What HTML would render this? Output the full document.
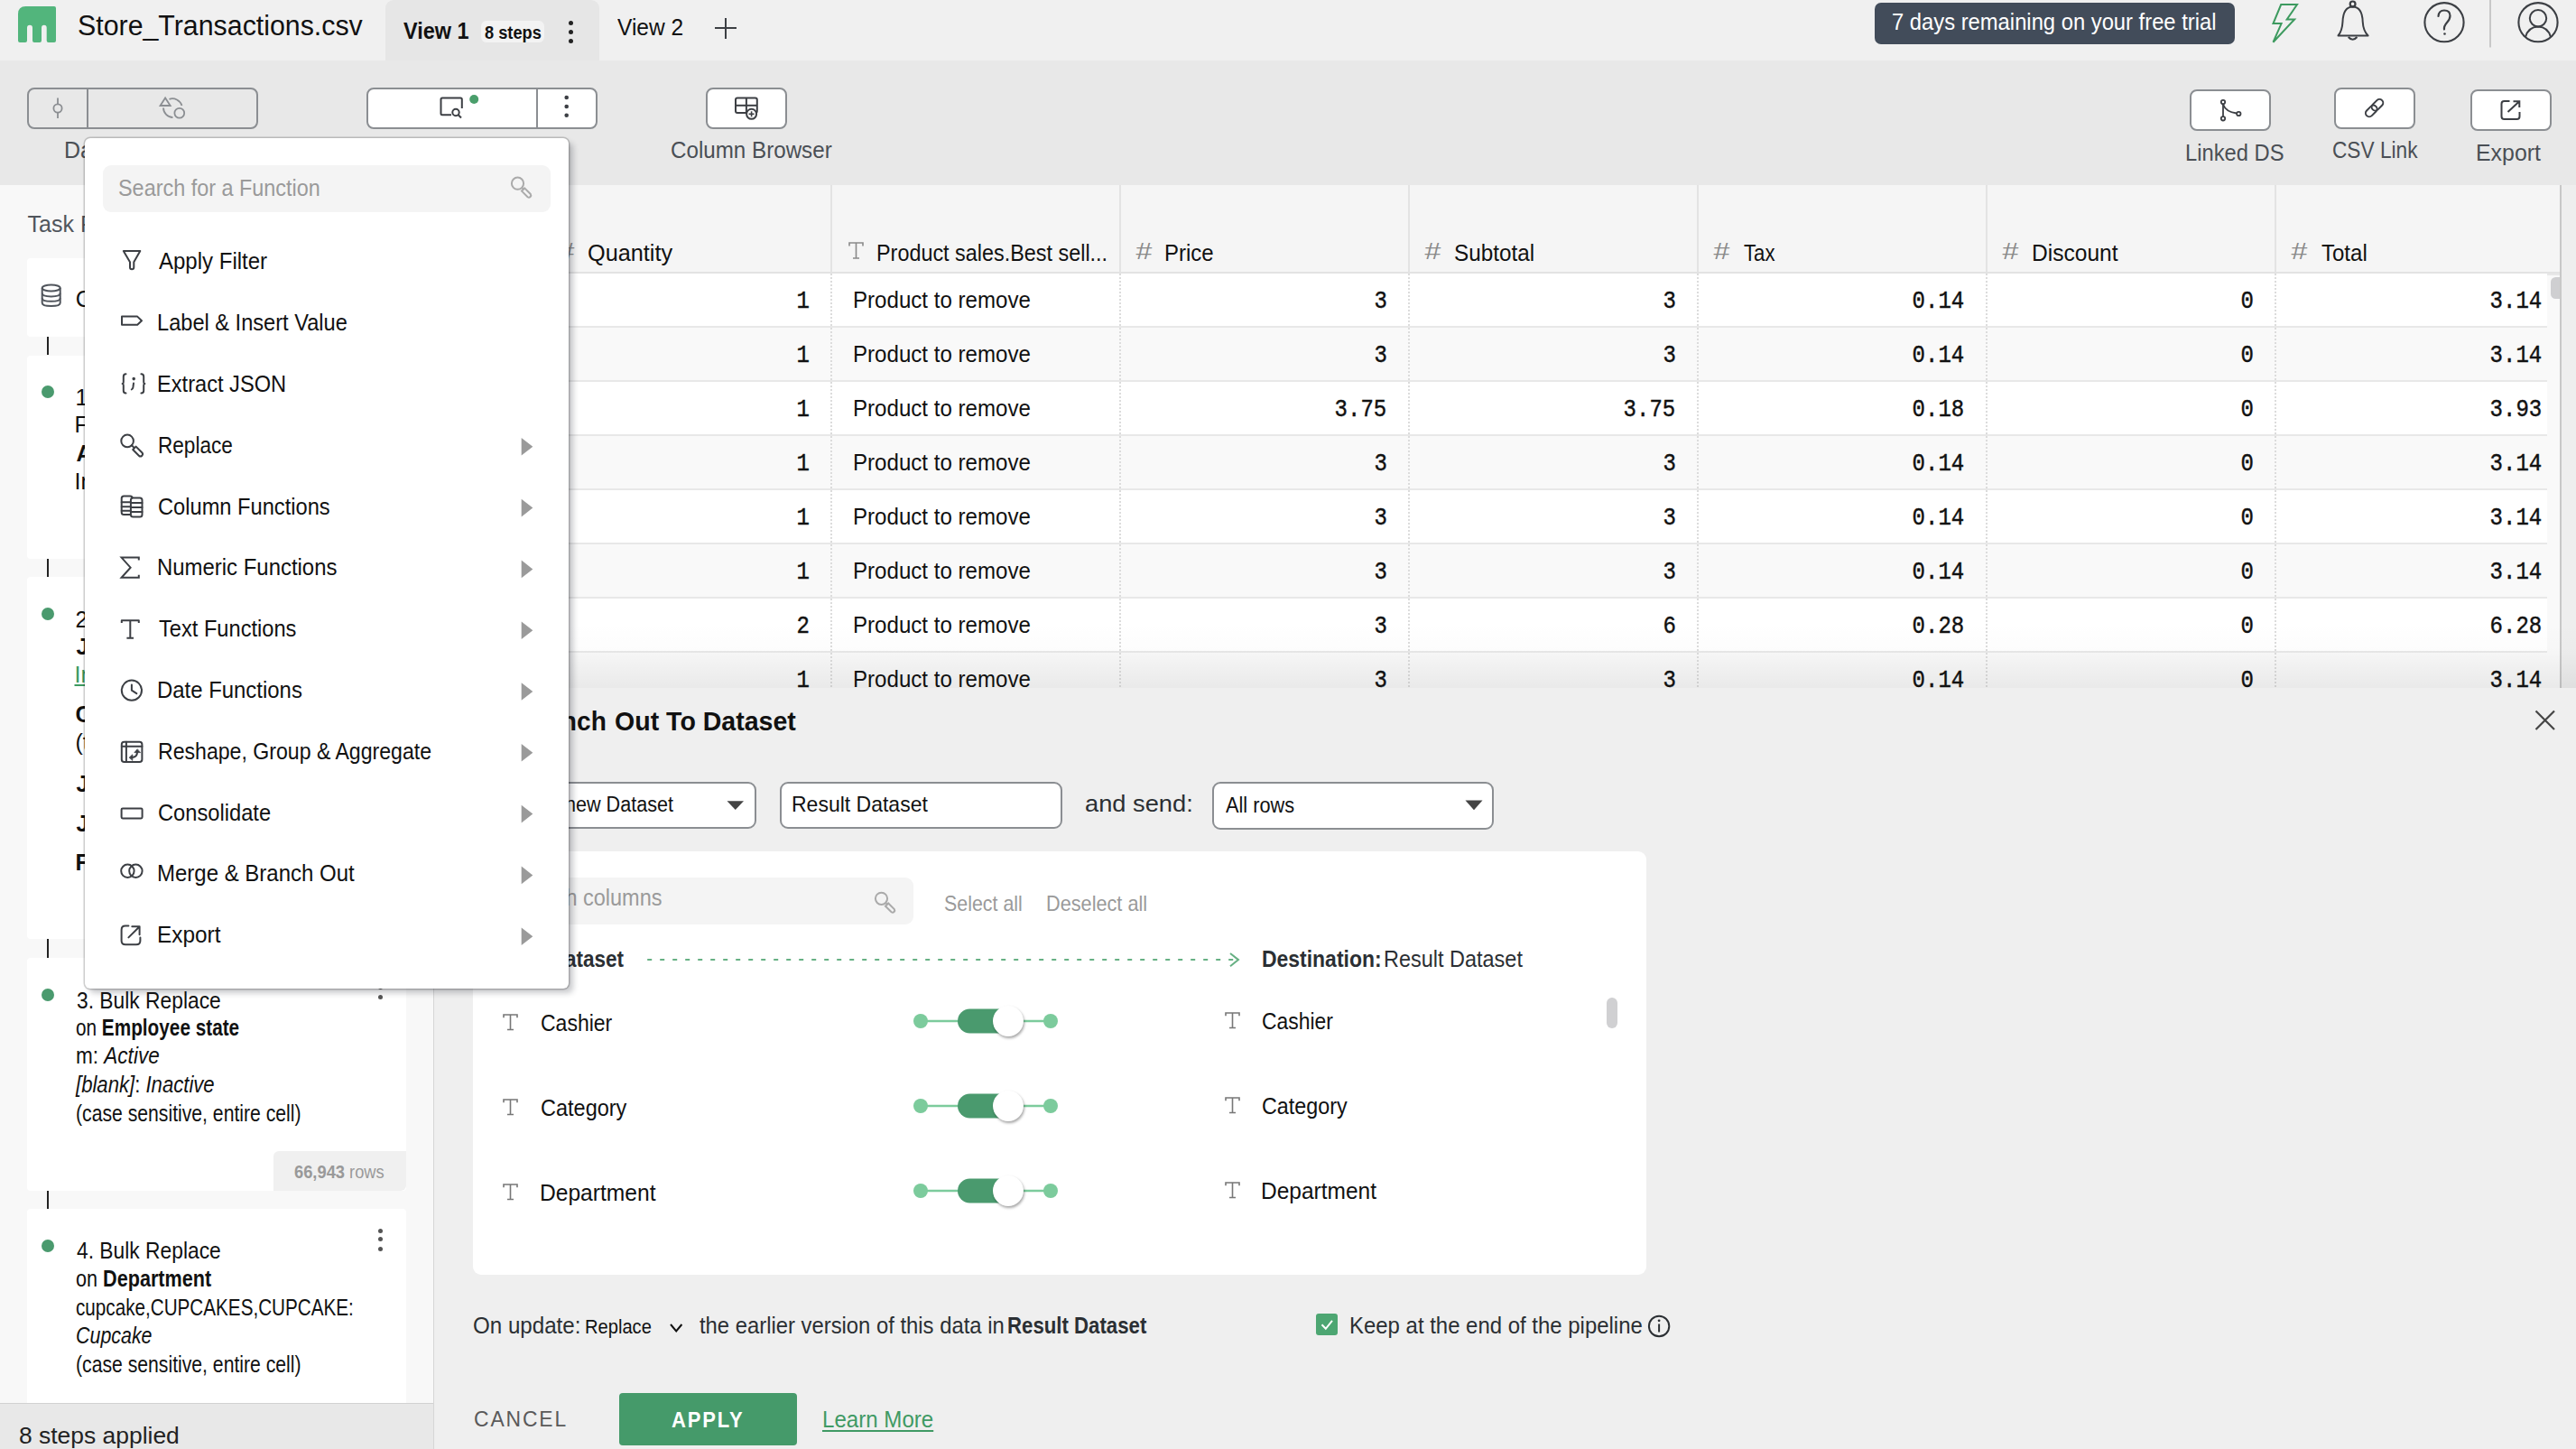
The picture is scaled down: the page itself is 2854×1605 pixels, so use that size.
<!DOCTYPE html>
<html><head><meta charset="utf-8">
<style>
*{margin:0;padding:0;box-sizing:border-box}
html,body{width:2854px;height:1605px;overflow:hidden}
body{position:relative;background:#f5f5f5;font-family:"Liberation Sans",sans-serif;color:#111}
.a{position:absolute}
.t{position:absolute;white-space:nowrap}
.m{font-family:"Liberation Mono",monospace}
.b{font-weight:bold}
svg{position:absolute;overflow:visible}
.btn{position:absolute;border:2px solid #8b8e92;border-radius:8px;background:#fff}
.lbl{color:#4a4f55;font-size:25px}
.card{position:absolute;left:30px;width:420px;background:#fff;border-radius:4px}
.conn{position:absolute;left:52px;width:2px;background:#222}
.dot{position:absolute;left:46px;width:14px;height:14px;border-radius:50%;background:#4a9a6e}
.kb{position:absolute;width:5px;height:5px;border-radius:50%;background:#555}
.ct{font-size:25px;color:#111}
</style></head><body>
<!-- ================= TOP BAR ================= -->
<div class="a" style="left:0;top:0;width:2854px;height:67px;background:#f0f0f0"></div>
<svg style="left:20px;top:7px" width="42" height="40" viewBox="0 0 42 40">
<path d="M0 8.5 Q0 0 8.5 0 L40 0 Q42 0 42 2 L42 38 Q42 40 40 40 L33.7 40 Q31.7 40 31.7 38 L31.7 23.7 Q31.7 20.7 28.85 20.7 Q26 20.7 26 23.7 L26 38 Q26 40 24 40 L18 40 Q16 40 16 38 L16 23.7 Q16 20.7 13 20.7 Q10 20.7 10 23.7 L10 38 Q10 40 8 40 L2 40 Q0 40 0 38 Z" fill="#52b57c"></path>
</svg>
<div class="t" style="font-size: 31px; color: rgb(17, 17, 17); line-height: 31px; top: 12.96px; left: 85.52px; transform: scaleX(0.9784); transform-origin: 0px 0px;">Store_Transactions.csv</div>
<div class="a" style="left:427px;top:0;width:237px;height:67px;background:#e6e6e6;border-radius:9px 9px 0 0"></div>
<div class="t b" style="font-size: 25px; line-height: 25px; top: 21.63px; left: 447px; transform: scaleX(0.9372); transform-origin: 0px 0px;">View 1</div>
<div class="a" style="left:533px;top:23px;width:70px;height:24px;background:#f3f3f3;border-radius:6px"></div>
<div class="t b" style="font-size: 20px; line-height: 20px; top: 25.87px; left: 536.7px; transform: scaleX(0.9113); transform-origin: 0px 0px;">8 steps</div>
<div class="kb" style="left:629.5px;top:22.5px;background:#222"></div>
<div class="kb" style="left:629.5px;top:32.5px;background:#222"></div>
<div class="kb" style="left:629.5px;top:42.5px;background:#222"></div>
<div class="t" style="font-size: 25px; line-height: 25px; top: 17.63px; left: 684px; transform: scaleX(0.9813); transform-origin: 0px 0px;">View 2</div>
<div class="a" style="left:792px;top:29.8px;width:24px;height:2.2px;background:#3c3f44"></div>
<div class="a" style="left:802.9px;top:19.5px;width:2.2px;height:23px;background:#3c3f44"></div>
<div class="a" style="left:2077px;top:3px;width:399px;height:46px;background:#424c5a;border-radius:7px"></div>
<div class="t" style="font-size: 25px; color: rgb(255, 255, 255); line-height: 25px; top: 12.23px; left: 2096.45px; transform: scaleX(0.9512); transform-origin: 0px 0px;">7 days remaining on your free trial</div>
<svg style="left:0;top:0" width="2854" height="67">
<path d="M2527.2 5.1 L2545 5.1 L2533.7 21.5 L2542.1 21.5 L2518.5 46.7 L2527.6 26.1 L2518.5 26.1 Z" fill="none" stroke="#3d9a5f" stroke-width="2" stroke-linejoin="miter"></path>
<circle cx="2606.6" cy="4.4" r="2.9" fill="none" stroke="#3c3f44" stroke-width="2.2"></circle>
<path d="M2590.5 39.5 Q2595 34 2595.5 24 Q2596 7.6 2606.6 7.4 Q2617.2 7.6 2617.7 24 Q2618.2 34 2623.6 39.5 Z" fill="none" stroke="#3c3f44" stroke-width="2.0" stroke-linejoin="round"></path>
<path d="M2601.8 41 Q2606.6 46.5 2611.4 41" fill="none" stroke="#3c3f44" stroke-width="2.2"></path>
<circle cx="2708" cy="24.7" r="21.6" fill="none" stroke="#3c3f44" stroke-width="2.1"></circle>
<path d="M2701.5 18 Q2702 11.5 2708 11.5 Q2714.5 11.5 2714.5 17.5 Q2714.5 21 2711 25 Q2707.5 29 2708 32.5" fill="none" stroke="#3c3f44" stroke-width="2.2" stroke-linecap="round"></path>
<circle cx="2708.5" cy="37.5" r="1.3" fill="#3c3f44"></circle>
<rect x="2758" y="0" width="2" height="52.5" fill="#c8c8c8"></rect>
<circle cx="2812" cy="24.7" r="21.6" fill="none" stroke="#3c3f44" stroke-width="2.1"></circle>
<circle cx="2812" cy="20.3" r="9.2" fill="none" stroke="#3c3f44" stroke-width="2.0"></circle>
<path d="M2798 41 Q2801 30 2812 29.5 Q2823 30 2826 41" fill="none" stroke="#3c3f44" stroke-width="2.0"></path>
</svg>

<!-- ================= TOOLBAR ================= -->
<div class="a" style="left:0;top:67px;width:2854px;height:138px;background:#e8e8e8"></div>
<div class="btn" style="left:30px;top:97px;width:256px;height:46px;background:transparent"></div>
<div class="a" style="left:96px;top:98px;width:2px;height:44px;background:#8b8e92"></div>
<div class="btn" style="left:406px;top:97px;width:256px;height:46px"></div>
<div class="a" style="left:594px;top:98px;width:2px;height:44px;background:#8b8e92"></div>
<div class="btn" style="left:782px;top:97px;width:90px;height:46px"></div>
<div class="btn" style="left:2426px;top:99px;width:90px;height:46px"></div>
<div class="btn" style="left:2586px;top:97px;width:90px;height:46px"></div>
<div class="btn" style="left:2737px;top:99px;width:90px;height:46px"></div>
<svg style="left:0;top:0" width="2854" height="205">
<g fill="none" stroke="#8b8e92" stroke-width="1.8">
<line x1="64" y1="108.5" x2="64" y2="115.2"></line><circle cx="64" cy="120" r="4.6"></circle><line x1="64" y1="124.8" x2="64" y2="131"></line>
<path d="M177.6 117 L183.1 108.5 L188.7 117 Z"></path>
<path d="M187.5 109.8 A11 11 0 0 1 201.5 117"></path>
<path d="M181 119.5 A11 11 0 0 0 191.5 130.2"></path>
<circle cx="198.8" cy="125.3" r="5.4"></circle>
</g>
<g fill="none" stroke="#3c3f44" stroke-width="2">
<path d="M500 127.3 L490 127.3 Q488.5 127.3 488.5 125.8 L488.5 110.1 Q488.5 108.6 490 108.6 L510.3 108.6 Q511.8 108.6 511.8 110.1 L511.8 120"></path>
<circle cx="505" cy="124.5" r="3.7"></circle><line x1="507.7" y1="127.2" x2="511" y2="130.5"></line>
<rect x="815" y="108.6" width="23.8" height="16.4" rx="2"></rect>
<line x1="815" y1="116.8" x2="838.8" y2="116.8"></line><line x1="826.9" y1="108.6" x2="826.9" y2="125"></line>
</g>
<circle cx="832.6" cy="126.3" r="5.5" fill="#fff" stroke="#3c3f44" stroke-width="2"></circle>
<line x1="829.6" y1="126.3" x2="835.6" y2="126.3" stroke="#3c3f44" stroke-width="1.6"></line><line x1="832.6" y1="123.3" x2="832.6" y2="129.3" stroke="#3c3f44" stroke-width="1.6"></line>
<circle cx="525.2" cy="110" r="5" fill="#4a9e6b"></circle>
<circle cx="627.7" cy="108" r="2.3" fill="#3c3f44"></circle><circle cx="627.7" cy="118" r="2.3" fill="#3c3f44"></circle><circle cx="627.7" cy="127.8" r="2.3" fill="#3c3f44"></circle>
<g fill="none" stroke="#3c3f44" stroke-width="1.8">
<circle cx="2463" cy="113" r="2.2"></circle><circle cx="2463" cy="131.3" r="2.2"></circle><circle cx="2480.3" cy="126" r="2.2"></circle>
<line x1="2463" y1="115.2" x2="2463" y2="129.1"></line>
<path d="M2463 115.5 Q2466 124 2478 125.5"></path>
<g transform="rotate(-45 2630.6 119.6)"><rect x="2618.6" y="115.6" width="14.5" height="8" rx="4" stroke-width="2"></rect><rect x="2628.1" y="115.6" width="14.5" height="8" rx="4" stroke-width="2"></rect></g>

<path d="M2780.5 112 L2774.5 112 Q2771.5 112 2771.5 115 L2771.5 129 Q2771.5 132 2774.5 132 L2788.5 132 Q2791.5 132 2791.5 129 L2791.5 124" stroke-width="2"></path>
<path d="M2778.5 124 L2791 112.5 M2784.5 112.3 L2791.3 112.3 L2791.3 119" stroke-width="2"></path>
</g>
</svg>
<div class="t lbl" style="line-height: 25px; top: 154.34px; left: 71px;">Data Sources</div>
<div class="t lbl" style="line-height: 25px; top: 154.34px; left: 743.13px; transform: scaleX(0.967); transform-origin: 0px 0px;">Column Browser</div>
<div class="t lbl" style="line-height: 25px; top: 156.84px; left: 2421.1px; transform: scaleX(0.9497); transform-origin: 0px 0px;">Linked DS</div>
<div class="t lbl" style="line-height: 25px; top: 153.84px; left: 2584.09px; transform: scaleX(0.9064); transform-origin: 0px 0px;">CSV Link</div>
<div class="t lbl" style="line-height: 25px; top: 156.84px; left: 2743.01px; transform: scaleX(0.9956); transform-origin: 0px 0px;">Export</div>


<!-- ================= LEFT PANEL ================= -->
<div class="a" style="left:0;top:205px;width:481px;height:1400px;background:#f8f8f8"></div>
<div class="t" style="font-size: 25px; color: rgb(80, 85, 92); line-height: 25px; top: 235.73px; left: 30.6px;">Task Pipeline</div>
<div class="card" style="top:285.7px;height:87px"></div>
<svg style="left:0;top:0" width="100" height="400">
<g fill="none" stroke="#50555c" stroke-width="2">
<ellipse cx="56.7" cy="319" rx="10" ry="3.6"></ellipse>
<path d="M46.7 319 L46.7 335.5 Q46.7 339 56.7 339 Q66.7 339 66.7 335.5 L66.7 319"></path>
<path d="M46.7 324.8 Q46.7 328.4 56.7 328.4 Q66.7 328.4 66.7 324.8"></path>
<path d="M46.7 330.2 Q46.7 333.8 56.7 333.8 Q66.7 333.8 66.7 330.2"></path>
</g></svg>
<div class="t ct" style="line-height: 25px; top: 319.33px; left: 83.8px;">Customer Transactions</div>
<div class="conn" style="top:373px;height:20px"></div>
<div class="card" style="top:393.7px;height:225.3px"></div>
<div class="dot" style="top:427px"></div>
<div class="t ct" style="line-height: 25px; top: 427.53px; left: 83.5px;">1. Filter</div>
<div class="t ct" style="line-height: 25px; top: 457.63px; left: 82.5px;">Filter rows where</div>
<div class="t b ct" style="line-height: 25px; top: 489.53px; left: 84.5px;">Active</div>
<div class="t ct" style="line-height: 25px; top: 520.84px; left: 82.5px;">In Employee state</div>
<div class="conn" style="top:619px;height:20px"></div>
<div class="card" style="top:639.2px;height:400.8px"></div>
<div class="dot" style="top:673px"></div>
<div class="t ct" style="line-height: 25px; top: 674.24px; left: 83.5px;">2. Join</div>
<div class="t b ct" style="line-height: 25px; top: 703.84px; left: 84.5px;">Join with</div>
<div class="t ct" style="color: rgb(61, 154, 95); text-decoration: underline; line-height: 25px; top: 735.44px; left: 82.5px;">Inventory</div>
<div class="t b ct" style="line-height: 25px; top: 779.44px; left: 83.5px;">Columns</div>
<div class="t ct" style="line-height: 25px; top: 809.84px; left: 83.5px;">(total 3)</div>
<div class="t b ct" style="line-height: 25px; top: 856.44px; left: 84.5px;">Join keys</div>
<div class="t b ct" style="line-height: 25px; top: 899.84px; left: 84.5px;">Join type</div>
<div class="t b ct" style="line-height: 25px; top: 943.34px; left: 83.5px;">Filter</div>
<div class="conn" style="top:1040px;height:21px"></div>
<div class="card" style="top:1061px;height:257.7px"></div>
<div class="dot" style="top:1095.3px"></div>
<div class="kb" style="left:419.3px;top:1080.5px"></div>
<div class="kb" style="left:419.3px;top:1090.5px"></div>
<div class="kb" style="left:419.3px;top:1102.1px"></div>
<div class="t ct" style="line-height: 25px; top: 1095.84px; left: 84.5px; transform: scaleX(0.9122); transform-origin: 0px 0px;">3. Bulk Replace</div>
<div class="t ct" style="line-height: 25px; top: 1125.74px; left: 83.88px; transform: scaleX(0.8303); transform-origin: 0px 0px;">on <b>Employee state</b></div>
<div class="t ct" style="line-height: 25px; top: 1157.43px; left: 83.82px; transform: scaleX(0.9017); transform-origin: 0px 0px;">m: <i>Active</i></div>
<div class="t ct" style="line-height: 25px; top: 1189.13px; left: 83.84px; transform: scaleX(0.8844); transform-origin: 0px 0px;"><i>[blank]</i>: <i>Inactive</i></div>
<div class="t ct" style="line-height: 25px; top: 1220.84px; left: 83.65px; transform: scaleX(0.8473); transform-origin: 0px 0px;">(case sensitive, entire cell)</div>
<div class="a" style="left:303.3px;top:1275.3px;width:146.7px;height:43.4px;background:#f0f0f0;border-radius:6px 0 6px 0"></div>
<div class="t" style="font-size: 20px; color: rgb(153, 153, 153); line-height: 20px; top: 1288.37px; left: 326.45px; transform: scaleX(0.9155); transform-origin: 0px 0px;"><b>66,943</b> rows</div>
<div class="conn" style="top:1318.7px;height:20.6px"></div>
<div class="card" style="top:1339.3px;height:300px"></div>
<div class="dot" style="top:1373px"></div>
<div class="kb" style="left:419.3px;top:1360.8px"></div>
<div class="kb" style="left:419.3px;top:1370.4px"></div>
<div class="kb" style="left:419.3px;top:1380.7px"></div>
<div class="t ct" style="line-height: 25px; top: 1373.34px; left: 84.5px; transform: scaleX(0.9122); transform-origin: 0px 0px;">4. Bulk Replace</div>
<div class="t ct" style="line-height: 25px; top: 1404.13px; left: 83.85px; transform: scaleX(0.8644); transform-origin: 0px 0px;">on <b>Department</b></div>
<div class="t ct" style="line-height: 25px; top: 1435.54px; left: 83.67px; transform: scaleX(0.8267); transform-origin: 0px 0px;">cupcake,CUPCAKES,CUPCAKE:</div>
<div class="t ct" style="font-style: italic; line-height: 25px; top: 1467.34px; left: 83.64px; transform: scaleX(0.8567); transform-origin: 0px 0px;">Cupcake</div>
<div class="t ct" style="line-height: 25px; top: 1499.13px; left: 83.65px; transform: scaleX(0.8473); transform-origin: 0px 0px;">(case sensitive, entire cell)</div>
<div class="a" style="left:0;top:1553.6px;width:481px;height:52px;background:#e8e8e8;border-top:1px solid #d2d2d2"></div>
<div class="a" style="left:480px;top:205px;width:2.5px;height:1400px;background:#d6d6d6"></div>
<div class="t" style="font-size: 25px; color: rgb(34, 34, 34); line-height: 25px; top: 1577.63px; left: 21.14px; transform: scaleX(1.0573); transform-origin: 0px 0px;">8 steps applied</div>

<!-- ================= TABLE ================= -->
<div class="a" style="left:481px;top:205px;width:2373px;height:557px;background:#fff;overflow:hidden">
<div class="a" style="left:0;top:0;width:2373px;height:96px;background:#f5f5f5"></div>
<div class="a" style="left:0;top:96px;width:2373px;height:2px;background:#e3e3e3"></div>
<div class="a" style="left:0;top:98px;width:2373px;height:58px;background:#ffffff"></div>
<div class="a" style="left:0;top:156px;width:2373px;height:2px;background:#e8e8e8"></div>
<div class="a" style="left:0;top:158px;width:2373px;height:58px;background:#f9f9f9"></div>
<div class="a" style="left:0;top:216px;width:2373px;height:2px;background:#e8e8e8"></div>
<div class="a" style="left:0;top:218px;width:2373px;height:58px;background:#ffffff"></div>
<div class="a" style="left:0;top:276px;width:2373px;height:2px;background:#e8e8e8"></div>
<div class="a" style="left:0;top:278px;width:2373px;height:58px;background:#f9f9f9"></div>
<div class="a" style="left:0;top:336px;width:2373px;height:2px;background:#e8e8e8"></div>
<div class="a" style="left:0;top:338px;width:2373px;height:58px;background:#ffffff"></div>
<div class="a" style="left:0;top:396px;width:2373px;height:2px;background:#e8e8e8"></div>
<div class="a" style="left:0;top:398px;width:2373px;height:58px;background:#f9f9f9"></div>
<div class="a" style="left:0;top:456px;width:2373px;height:2px;background:#e8e8e8"></div>
<div class="a" style="left:0;top:458px;width:2373px;height:58px;background:#ffffff"></div>
<div class="a" style="left:0;top:516px;width:2373px;height:2px;background:#e8e8e8"></div>
<div class="a" style="left:0;top:518px;width:2373px;height:58px;background:#f9f9f9"></div>
<div class="a" style="left:0;top:576px;width:2373px;height:2px;background:#e8e8e8"></div>
<div class="a" style="left:119px;top:0;width:2px;height:96px;background:#e3e3e3"></div>
<div class="a" style="left:119px;top:98px;width:2px;height:460px;background:repeating-linear-gradient(to bottom,#dcdcdc 0 2px,transparent 2px 4px)"></div>
<div class="a" style="left:439px;top:0;width:2px;height:96px;background:#e3e3e3"></div>
<div class="a" style="left:439px;top:98px;width:2px;height:460px;background:repeating-linear-gradient(to bottom,#dcdcdc 0 2px,transparent 2px 4px)"></div>
<div class="a" style="left:759px;top:0;width:2px;height:96px;background:#e3e3e3"></div>
<div class="a" style="left:759px;top:98px;width:2px;height:460px;background:repeating-linear-gradient(to bottom,#dcdcdc 0 2px,transparent 2px 4px)"></div>
<div class="a" style="left:1079px;top:0;width:2px;height:96px;background:#e3e3e3"></div>
<div class="a" style="left:1079px;top:98px;width:2px;height:460px;background:repeating-linear-gradient(to bottom,#dcdcdc 0 2px,transparent 2px 4px)"></div>
<div class="a" style="left:1399px;top:0;width:2px;height:96px;background:#e3e3e3"></div>
<div class="a" style="left:1399px;top:98px;width:2px;height:460px;background:repeating-linear-gradient(to bottom,#dcdcdc 0 2px,transparent 2px 4px)"></div>
<div class="a" style="left:1719px;top:0;width:2px;height:96px;background:#e3e3e3"></div>
<div class="a" style="left:1719px;top:98px;width:2px;height:460px;background:repeating-linear-gradient(to bottom,#dcdcdc 0 2px,transparent 2px 4px)"></div>
<div class="a" style="left:2039px;top:0;width:2px;height:96px;background:#e3e3e3"></div>
<div class="a" style="left:2039px;top:98px;width:2px;height:460px;background:repeating-linear-gradient(to bottom,#dcdcdc 0 2px,transparent 2px 4px)"></div>
<div class="a" style="left:2341px;top:98px;width:15px;height:460px;background:#f9f9f9;border-top:2px solid #e8e8e8"></div>
<div class="a" style="left:2345px;top:101.8px;width:11px;height:24px;border-radius:5.5px 0 0 5.5px;background:#cfcfd1"></div>
<div class="a" style="left:2355.3px;top:0;width:1.6px;height:557px;background:#c8c8c8"></div>
<div class="a" style="left:2356.9px;top:0;width:20px;height:557px;background:#eeeeee"></div>
</div>
<div class="a" style="left:481px;top:690px;width:2373px;height:72px;background:linear-gradient(to bottom,rgba(0,0,0,0) 0%,rgba(0,0,0,0.01) 45%,rgba(0,0,0,0.03) 65%,rgba(0,0,0,0.062) 100%)"></div>
<div class="t" style="font-size: 25px; color: rgb(138, 138, 138); font-style: italic; line-height: 25px; top: 266.13px; left: 618px; transform: scaleX(1.2867); transform-origin: 0px 0px;">#</div>
<div class="t" style="font-size: 26px; color: rgb(17, 17, 17); line-height: 26px; top: 267.19px; left: 651.03px; transform: scaleX(0.9715); transform-origin: 0px 0px;">Quantity</div>
<svg style="left:940px;top:268px" width="17" height="19"><path d="M1 4.5 L1 1 L16 1 L16 4.5 M8.5 1 L8.5 18 M5 18 L12 18" fill="none" stroke="#8a8a8a" stroke-width="1.6"></path></svg>
<div class="t" style="font-size: 26px; color: rgb(17, 17, 17); line-height: 26px; top: 267.19px; left: 971.2px; transform: scaleX(0.8996); transform-origin: 0px 0px;">Product sales.Best sell...</div>
<div class="t" style="font-size: 25px; color: rgb(138, 138, 138); font-style: italic; line-height: 25px; top: 266.13px; left: 1258px; transform: scaleX(1.2867); transform-origin: 0px 0px;">#</div>
<div class="t" style="font-size: 26px; color: rgb(17, 17, 17); line-height: 26px; top: 267.19px; left: 1290.25px; transform: scaleX(0.9229); transform-origin: 0px 0px;">Price</div>
<div class="t" style="font-size: 25px; color: rgb(138, 138, 138); font-style: italic; line-height: 25px; top: 266.13px; left: 1578px; transform: scaleX(1.2867); transform-origin: 0px 0px;">#</div>
<div class="t" style="font-size: 26px; color: rgb(17, 17, 17); line-height: 26px; top: 267.19px; left: 1611.37px; transform: scaleX(0.9335); transform-origin: 0px 0px;">Subtotal</div>
<div class="t" style="font-size: 25px; color: rgb(138, 138, 138); font-style: italic; line-height: 25px; top: 266.13px; left: 1898px; transform: scaleX(1.2867); transform-origin: 0px 0px;">#</div>
<div class="t" style="font-size: 26px; color: rgb(17, 17, 17); line-height: 26px; top: 267.19px; left: 1932.2px; transform: scaleX(0.8527); transform-origin: 0px 0px;">Tax</div>
<div class="t" style="font-size: 25px; color: rgb(138, 138, 138); font-style: italic; line-height: 25px; top: 266.13px; left: 2218px; transform: scaleX(1.2867); transform-origin: 0px 0px;">#</div>
<div class="t" style="font-size: 26px; color: rgb(17, 17, 17); line-height: 26px; top: 267.19px; left: 2250.71px; transform: scaleX(0.9446); transform-origin: 0px 0px;">Discount</div>
<div class="t" style="font-size: 25px; color: rgb(138, 138, 138); font-style: italic; line-height: 25px; top: 266.13px; left: 2538px; transform: scaleX(1.2867); transform-origin: 0px 0px;">#</div>
<div class="t" style="font-size: 26px; color: rgb(17, 17, 17); line-height: 26px; top: 267.19px; left: 2572.2px; transform: scaleX(0.9235); transform-origin: 0px 0px;">Total</div>
<div class="t m" style="font-size: 28px; color: rgb(17, 17, 17); -webkit-text-stroke: 0.45px rgb(17, 17, 17); right: 1957.3px; transform: scaleX(0.857); transform-origin: 100% 0px; line-height: 28px; top: 320.25px;">1</div>
<div class="t" style="font-size: 25px; color: rgb(17, 17, 17); line-height: 25px; top: 319.94px; left: 944.67px; transform: scaleX(0.964); transform-origin: 0px 0px;">Product to remove</div>
<div class="t m" style="font-size: 28px; color: rgb(17, 17, 17); -webkit-text-stroke: 0.45px rgb(17, 17, 17); right: 1317.3px; transform: scaleX(0.857); transform-origin: 100% 0px; line-height: 28px; top: 320.25px;">3</div>
<div class="t m" style="font-size: 28px; color: rgb(17, 17, 17); -webkit-text-stroke: 0.45px rgb(17, 17, 17); right: 997.3px; transform: scaleX(0.857); transform-origin: 100% 0px; line-height: 28px; top: 320.25px;">3</div>
<div class="t m" style="font-size: 28px; color: rgb(17, 17, 17); -webkit-text-stroke: 0.45px rgb(17, 17, 17); right: 677.3px; transform: scaleX(0.857); transform-origin: 100% 0px; line-height: 28px; top: 320.25px;">0.14</div>
<div class="t m" style="font-size: 28px; color: rgb(17, 17, 17); -webkit-text-stroke: 0.45px rgb(17, 17, 17); right: 357.3px; transform: scaleX(0.857); transform-origin: 100% 0px; line-height: 28px; top: 320.25px;">0</div>
<div class="t m" style="font-size: 28px; color: rgb(17, 17, 17); -webkit-text-stroke: 0.45px rgb(17, 17, 17); right: 37.3px; transform: scaleX(0.857); transform-origin: 100% 0px; line-height: 28px; top: 320.25px;">3.14</div>
<div class="t m" style="font-size: 28px; color: rgb(17, 17, 17); -webkit-text-stroke: 0.45px rgb(17, 17, 17); right: 1957.3px; transform: scaleX(0.857); transform-origin: 100% 0px; line-height: 28px; top: 380.25px;">1</div>
<div class="t" style="font-size: 25px; color: rgb(17, 17, 17); line-height: 25px; top: 379.94px; left: 944.67px; transform: scaleX(0.964); transform-origin: 0px 0px;">Product to remove</div>
<div class="t m" style="font-size: 28px; color: rgb(17, 17, 17); -webkit-text-stroke: 0.45px rgb(17, 17, 17); right: 1317.3px; transform: scaleX(0.857); transform-origin: 100% 0px; line-height: 28px; top: 380.25px;">3</div>
<div class="t m" style="font-size: 28px; color: rgb(17, 17, 17); -webkit-text-stroke: 0.45px rgb(17, 17, 17); right: 997.3px; transform: scaleX(0.857); transform-origin: 100% 0px; line-height: 28px; top: 380.25px;">3</div>
<div class="t m" style="font-size: 28px; color: rgb(17, 17, 17); -webkit-text-stroke: 0.45px rgb(17, 17, 17); right: 677.3px; transform: scaleX(0.857); transform-origin: 100% 0px; line-height: 28px; top: 380.25px;">0.14</div>
<div class="t m" style="font-size: 28px; color: rgb(17, 17, 17); -webkit-text-stroke: 0.45px rgb(17, 17, 17); right: 357.3px; transform: scaleX(0.857); transform-origin: 100% 0px; line-height: 28px; top: 380.25px;">0</div>
<div class="t m" style="font-size: 28px; color: rgb(17, 17, 17); -webkit-text-stroke: 0.45px rgb(17, 17, 17); right: 37.3px; transform: scaleX(0.857); transform-origin: 100% 0px; line-height: 28px; top: 380.25px;">3.14</div>
<div class="t m" style="font-size: 28px; color: rgb(17, 17, 17); -webkit-text-stroke: 0.45px rgb(17, 17, 17); right: 1957.3px; transform: scaleX(0.857); transform-origin: 100% 0px; line-height: 28px; top: 440.25px;">1</div>
<div class="t" style="font-size: 25px; color: rgb(17, 17, 17); line-height: 25px; top: 439.94px; left: 944.67px; transform: scaleX(0.964); transform-origin: 0px 0px;">Product to remove</div>
<div class="t m" style="font-size: 28px; color: rgb(17, 17, 17); -webkit-text-stroke: 0.45px rgb(17, 17, 17); right: 1317.3px; transform: scaleX(0.857); transform-origin: 100% 0px; line-height: 28px; top: 440.25px;">3.75</div>
<div class="t m" style="font-size: 28px; color: rgb(17, 17, 17); -webkit-text-stroke: 0.45px rgb(17, 17, 17); right: 997.3px; transform: scaleX(0.857); transform-origin: 100% 0px; line-height: 28px; top: 440.25px;">3.75</div>
<div class="t m" style="font-size: 28px; color: rgb(17, 17, 17); -webkit-text-stroke: 0.45px rgb(17, 17, 17); right: 677.3px; transform: scaleX(0.857); transform-origin: 100% 0px; line-height: 28px; top: 440.25px;">0.18</div>
<div class="t m" style="font-size: 28px; color: rgb(17, 17, 17); -webkit-text-stroke: 0.45px rgb(17, 17, 17); right: 357.3px; transform: scaleX(0.857); transform-origin: 100% 0px; line-height: 28px; top: 440.25px;">0</div>
<div class="t m" style="font-size: 28px; color: rgb(17, 17, 17); -webkit-text-stroke: 0.45px rgb(17, 17, 17); right: 37.3px; transform: scaleX(0.857); transform-origin: 100% 0px; line-height: 28px; top: 440.25px;">3.93</div>
<div class="t m" style="font-size: 28px; color: rgb(17, 17, 17); -webkit-text-stroke: 0.45px rgb(17, 17, 17); right: 1957.3px; transform: scaleX(0.857); transform-origin: 100% 0px; line-height: 28px; top: 500.25px;">1</div>
<div class="t" style="font-size: 25px; color: rgb(17, 17, 17); line-height: 25px; top: 499.94px; left: 944.67px; transform: scaleX(0.964); transform-origin: 0px 0px;">Product to remove</div>
<div class="t m" style="font-size: 28px; color: rgb(17, 17, 17); -webkit-text-stroke: 0.45px rgb(17, 17, 17); right: 1317.3px; transform: scaleX(0.857); transform-origin: 100% 0px; line-height: 28px; top: 500.25px;">3</div>
<div class="t m" style="font-size: 28px; color: rgb(17, 17, 17); -webkit-text-stroke: 0.45px rgb(17, 17, 17); right: 997.3px; transform: scaleX(0.857); transform-origin: 100% 0px; line-height: 28px; top: 500.25px;">3</div>
<div class="t m" style="font-size: 28px; color: rgb(17, 17, 17); -webkit-text-stroke: 0.45px rgb(17, 17, 17); right: 677.3px; transform: scaleX(0.857); transform-origin: 100% 0px; line-height: 28px; top: 500.25px;">0.14</div>
<div class="t m" style="font-size: 28px; color: rgb(17, 17, 17); -webkit-text-stroke: 0.45px rgb(17, 17, 17); right: 357.3px; transform: scaleX(0.857); transform-origin: 100% 0px; line-height: 28px; top: 500.25px;">0</div>
<div class="t m" style="font-size: 28px; color: rgb(17, 17, 17); -webkit-text-stroke: 0.45px rgb(17, 17, 17); right: 37.3px; transform: scaleX(0.857); transform-origin: 100% 0px; line-height: 28px; top: 500.25px;">3.14</div>
<div class="t m" style="font-size: 28px; color: rgb(17, 17, 17); -webkit-text-stroke: 0.45px rgb(17, 17, 17); right: 1957.3px; transform: scaleX(0.857); transform-origin: 100% 0px; line-height: 28px; top: 560.25px;">1</div>
<div class="t" style="font-size: 25px; color: rgb(17, 17, 17); line-height: 25px; top: 559.94px; left: 944.67px; transform: scaleX(0.964); transform-origin: 0px 0px;">Product to remove</div>
<div class="t m" style="font-size: 28px; color: rgb(17, 17, 17); -webkit-text-stroke: 0.45px rgb(17, 17, 17); right: 1317.3px; transform: scaleX(0.857); transform-origin: 100% 0px; line-height: 28px; top: 560.25px;">3</div>
<div class="t m" style="font-size: 28px; color: rgb(17, 17, 17); -webkit-text-stroke: 0.45px rgb(17, 17, 17); right: 997.3px; transform: scaleX(0.857); transform-origin: 100% 0px; line-height: 28px; top: 560.25px;">3</div>
<div class="t m" style="font-size: 28px; color: rgb(17, 17, 17); -webkit-text-stroke: 0.45px rgb(17, 17, 17); right: 677.3px; transform: scaleX(0.857); transform-origin: 100% 0px; line-height: 28px; top: 560.25px;">0.14</div>
<div class="t m" style="font-size: 28px; color: rgb(17, 17, 17); -webkit-text-stroke: 0.45px rgb(17, 17, 17); right: 357.3px; transform: scaleX(0.857); transform-origin: 100% 0px; line-height: 28px; top: 560.25px;">0</div>
<div class="t m" style="font-size: 28px; color: rgb(17, 17, 17); -webkit-text-stroke: 0.45px rgb(17, 17, 17); right: 37.3px; transform: scaleX(0.857); transform-origin: 100% 0px; line-height: 28px; top: 560.25px;">3.14</div>
<div class="t m" style="font-size: 28px; color: rgb(17, 17, 17); -webkit-text-stroke: 0.45px rgb(17, 17, 17); right: 1957.3px; transform: scaleX(0.857); transform-origin: 100% 0px; line-height: 28px; top: 620.25px;">1</div>
<div class="t" style="font-size: 25px; color: rgb(17, 17, 17); line-height: 25px; top: 619.94px; left: 944.67px; transform: scaleX(0.964); transform-origin: 0px 0px;">Product to remove</div>
<div class="t m" style="font-size: 28px; color: rgb(17, 17, 17); -webkit-text-stroke: 0.45px rgb(17, 17, 17); right: 1317.3px; transform: scaleX(0.857); transform-origin: 100% 0px; line-height: 28px; top: 620.25px;">3</div>
<div class="t m" style="font-size: 28px; color: rgb(17, 17, 17); -webkit-text-stroke: 0.45px rgb(17, 17, 17); right: 997.3px; transform: scaleX(0.857); transform-origin: 100% 0px; line-height: 28px; top: 620.25px;">3</div>
<div class="t m" style="font-size: 28px; color: rgb(17, 17, 17); -webkit-text-stroke: 0.45px rgb(17, 17, 17); right: 677.3px; transform: scaleX(0.857); transform-origin: 100% 0px; line-height: 28px; top: 620.25px;">0.14</div>
<div class="t m" style="font-size: 28px; color: rgb(17, 17, 17); -webkit-text-stroke: 0.45px rgb(17, 17, 17); right: 357.3px; transform: scaleX(0.857); transform-origin: 100% 0px; line-height: 28px; top: 620.25px;">0</div>
<div class="t m" style="font-size: 28px; color: rgb(17, 17, 17); -webkit-text-stroke: 0.45px rgb(17, 17, 17); right: 37.3px; transform: scaleX(0.857); transform-origin: 100% 0px; line-height: 28px; top: 620.25px;">3.14</div>
<div class="t m" style="font-size: 28px; color: rgb(17, 17, 17); -webkit-text-stroke: 0.45px rgb(17, 17, 17); right: 1957.3px; transform: scaleX(0.857); transform-origin: 100% 0px; line-height: 28px; top: 680.25px;">2</div>
<div class="t" style="font-size: 25px; color: rgb(17, 17, 17); line-height: 25px; top: 679.94px; left: 944.67px; transform: scaleX(0.964); transform-origin: 0px 0px;">Product to remove</div>
<div class="t m" style="font-size: 28px; color: rgb(17, 17, 17); -webkit-text-stroke: 0.45px rgb(17, 17, 17); right: 1317.3px; transform: scaleX(0.857); transform-origin: 100% 0px; line-height: 28px; top: 680.25px;">3</div>
<div class="t m" style="font-size: 28px; color: rgb(17, 17, 17); -webkit-text-stroke: 0.45px rgb(17, 17, 17); right: 997.3px; transform: scaleX(0.857); transform-origin: 100% 0px; line-height: 28px; top: 680.25px;">6</div>
<div class="t m" style="font-size: 28px; color: rgb(17, 17, 17); -webkit-text-stroke: 0.45px rgb(17, 17, 17); right: 677.3px; transform: scaleX(0.857); transform-origin: 100% 0px; line-height: 28px; top: 680.25px;">0.28</div>
<div class="t m" style="font-size: 28px; color: rgb(17, 17, 17); -webkit-text-stroke: 0.45px rgb(17, 17, 17); right: 357.3px; transform: scaleX(0.857); transform-origin: 100% 0px; line-height: 28px; top: 680.25px;">0</div>
<div class="t m" style="font-size: 28px; color: rgb(17, 17, 17); -webkit-text-stroke: 0.45px rgb(17, 17, 17); right: 37.3px; transform: scaleX(0.857); transform-origin: 100% 0px; line-height: 28px; top: 680.25px;">6.28</div>
<div class="t m" style="font-size: 28px; color: rgb(17, 17, 17); -webkit-text-stroke: 0.45px rgb(17, 17, 17); right: 1957.3px; transform: scaleX(0.857); transform-origin: 100% 0px; line-height: 28px; top: 740.25px;">1</div>
<div class="t" style="font-size: 25px; color: rgb(17, 17, 17); line-height: 25px; top: 739.94px; left: 944.67px; transform: scaleX(0.964); transform-origin: 0px 0px;">Product to remove</div>
<div class="t m" style="font-size: 28px; color: rgb(17, 17, 17); -webkit-text-stroke: 0.45px rgb(17, 17, 17); right: 1317.3px; transform: scaleX(0.857); transform-origin: 100% 0px; line-height: 28px; top: 740.25px;">3</div>
<div class="t m" style="font-size: 28px; color: rgb(17, 17, 17); -webkit-text-stroke: 0.45px rgb(17, 17, 17); right: 997.3px; transform: scaleX(0.857); transform-origin: 100% 0px; line-height: 28px; top: 740.25px;">3</div>
<div class="t m" style="font-size: 28px; color: rgb(17, 17, 17); -webkit-text-stroke: 0.45px rgb(17, 17, 17); right: 677.3px; transform: scaleX(0.857); transform-origin: 100% 0px; line-height: 28px; top: 740.25px;">0.14</div>
<div class="t m" style="font-size: 28px; color: rgb(17, 17, 17); -webkit-text-stroke: 0.45px rgb(17, 17, 17); right: 357.3px; transform: scaleX(0.857); transform-origin: 100% 0px; line-height: 28px; top: 740.25px;">0</div>
<div class="t m" style="font-size: 28px; color: rgb(17, 17, 17); -webkit-text-stroke: 0.45px rgb(17, 17, 17); right: 37.3px; transform: scaleX(0.857); transform-origin: 100% 0px; line-height: 28px; top: 740.25px;">3.14</div>
<!-- ================= MODAL ================= -->
<div class="a" style="left:481px;top:762px;width:2373px;height:843px;background:#efefef"></div>
<div class="t b" style="font-size: 30px; color: rgb(17, 17, 17); line-height: 30px; top: 784.2px; left: 575.13px; transform: scaleX(0.9367); transform-origin: 0px 0px;">Branch</div>
<div class="t b" style="font-size: 30px; color: rgb(17, 17, 17); line-height: 30px; top: 784.2px; left: 680.55px; transform: scaleX(0.9513); transform-origin: 0px 0px;">Out To Dataset</div>
<svg style="left:0;top:0" width="2854" height="1605"><path d="M2809.5 787.5 L2830 808 M2830 787.5 L2809.5 808" stroke="#444" stroke-width="2.2" fill="none"></path></svg>
<div class="btn" style="left:524px;top:865.5px;width:313.6px;height:52.8px;border-radius:9px"></div>
<div class="t" style="font-size: 23px; color: rgb(17, 17, 17); line-height: 23px; top: 880.23px; left: 537.06px; transform: scaleX(0.9398); transform-origin: 0px 0px;">Create a new Dataset</div>

<div class="btn" style="left:864px;top:865.5px;width:313px;height:52.8px;border-radius:9px"></div>
<div class="t" style="font-size: 24px; color: rgb(17, 17, 17); line-height: 24px; top: 878.58px; left: 877.04px; transform: scaleX(0.9583); transform-origin: 0px 0px;">Result Dataset</div>
<div class="t" style="font-size: 26px; color: rgb(43, 47, 51); line-height: 26px; top: 876.69px; left: 1202.25px; transform: scaleX(1.0488); transform-origin: 0px 0px;">and send:</div>
<div class="btn" style="left:1343px;top:866px;width:312px;height:52.5px;border-radius:9px"></div>
<div class="t" style="font-size: 23px; color: rgb(17, 17, 17); line-height: 23px; top: 880.63px; left: 1358.2px; transform: scaleX(0.9449); transform-origin: 0px 0px;">All rows</div>
<svg style="left:0;top:0" width="2854" height="1605"><path d="M805.5 887.2 L824 887.2 L814.75 897 Z" fill="#444"></path><path d="M1623.5 886.4 L1642.5 886.4 L1633 897.2 Z" fill="#444"></path></svg>
<div class="a" style="left:524px;top:943px;width:1300px;height:469px;background:#fff;border-radius:9px"></div>
<div class="a" style="left:548px;top:971.5px;width:464px;height:52.8px;background:#f4f4f4;border-radius:9px"></div>
<div class="t" style="font-size: 25px; color: rgb(154, 154, 154); line-height: 25px; top: 982.44px; left: 565.06px; transform: scaleX(0.9401); transform-origin: 0px 0px;">Search columns</div>
<svg style="left:0;top:0" width="2854" height="1605"><g fill="none" stroke="#aaa" stroke-width="2"><circle cx="976.5" cy="995.3" r="6.6"></circle><line x1="981.3" y1="1000.1" x2="983.5" y2="1002.3"></line><path d="M984.2 1000.5 L990.8 1007.1 A2.3 2.3 0 0 1 987.6 1010.3 L981 1003.7 Z"></path></g></svg>
<div class="t" style="font-size: 24px; color: rgb(154, 154, 154); line-height: 24px; top: 988.98px; left: 1046.41px; transform: scaleX(0.8911); transform-origin: 0px 0px;">Select all</div>
<div class="t" style="font-size: 24px; color: rgb(154, 154, 154); line-height: 24px; top: 988.98px; left: 1159.3px; transform: scaleX(0.9037); transform-origin: 0px 0px;">Deselect all</div>
<div class="t b" style="font-size: 25px; color: rgb(43, 47, 51); line-height: 25px; top: 1049.93px; left: 527px; transform: scaleX(0.9015); transform-origin: 0px 0px;">Source Dataset</div>
<svg style="left:0;top:0" width="2854" height="1605"><line x1="717.2" y1="1063.1" x2="1370" y2="1063.1" stroke="#66b083" stroke-width="2" stroke-dasharray="5 9"></line><path d="M1363 1056 L1372 1063.1 L1363 1070.3" fill="none" stroke="#66b083" stroke-width="2"></path></svg>
<div class="t b" style="font-size: 25px; color: rgb(43, 47, 51); line-height: 25px; top: 1049.84px; left: 1397.98px; transform: scaleX(0.9177); transform-origin: 0px 0px;">Destination:</div>
<div class="t" style="font-size: 25px; color: rgb(43, 47, 51); line-height: 25px; top: 1049.84px; left: 1533.12px; transform: scaleX(0.9388); transform-origin: 0px 0px;">Result Dataset</div>
<svg style="left:557.4px;top:1122.8px" width="17" height="19"><path d="M1 4.2 L1 1 L16 1 L16 4.2 M8.5 1 L8.5 17.5 M5 17.5 L12 17.5" fill="none" stroke="#777" stroke-width="1.6"></path></svg>
<div class="t" style="font-size: 25px; color: rgb(17, 17, 17); line-height: 25px; top: 1120.84px; left: 598.68px; transform: scaleX(0.9196); transform-origin: 0px 0px;">Cashier</div>
<svg style="left:1356.6px;top:1121px" width="17" height="19"><path d="M1 4.2 L1 1 L16 1 L16 4.2 M8.5 1 L8.5 17.5 M5 17.5 L12 17.5" fill="none" stroke="#777" stroke-width="1.6"></path></svg>
<div class="t" style="font-size: 25px; color: rgb(17, 17, 17); line-height: 25px; top: 1118.93px; left: 1397.99px; transform: scaleX(0.9149); transform-origin: 0px 0px;">Cashier</div>
<svg style="left:0;top:0" width="2854" height="1605"><line x1="1020" y1="1131" x2="1164" y2="1131" stroke="#7ccb9c" stroke-width="2.5"></line><circle cx="1020" cy="1131" r="8" fill="#7ccb9c"></circle><circle cx="1164" cy="1131" r="8" fill="#7ccb9c"></circle><rect x="1061" y="1117.5" width="62" height="27" rx="13.5" fill="#4a9a6e"></rect></svg>
<div class="a" style="left:1100px;top:1114px;width:34px;height:34px;border-radius:50%;background:#fff;box-shadow:1px 2px 3px rgba(0,0,0,0.35)"></div>
<svg style="left:557.4px;top:1216.8px" width="17" height="19"><path d="M1 4.2 L1 1 L16 1 L16 4.2 M8.5 1 L8.5 17.5 M5 17.5 L12 17.5" fill="none" stroke="#777" stroke-width="1.6"></path></svg>
<div class="t" style="font-size: 25px; color: rgb(17, 17, 17); line-height: 25px; top: 1214.84px; left: 598.66px; transform: scaleX(0.9402); transform-origin: 0px 0px;">Category</div>
<svg style="left:1356.6px;top:1215px" width="17" height="19"><path d="M1 4.2 L1 1 L16 1 L16 4.2 M8.5 1 L8.5 17.5 M5 17.5 L12 17.5" fill="none" stroke="#777" stroke-width="1.6"></path></svg>
<div class="t" style="font-size: 25px; color: rgb(17, 17, 17); line-height: 25px; top: 1212.93px; left: 1397.97px; transform: scaleX(0.9322); transform-origin: 0px 0px;">Category</div>
<svg style="left:0;top:0" width="2854" height="1605"><line x1="1020" y1="1225" x2="1164" y2="1225" stroke="#7ccb9c" stroke-width="2.5"></line><circle cx="1020" cy="1225" r="8" fill="#7ccb9c"></circle><circle cx="1164" cy="1225" r="8" fill="#7ccb9c"></circle><rect x="1061" y="1211.5" width="62" height="27" rx="13.5" fill="#4a9a6e"></rect></svg>
<div class="a" style="left:1100px;top:1208px;width:34px;height:34px;border-radius:50%;background:#fff;box-shadow:1px 2px 3px rgba(0,0,0,0.35)"></div>
<svg style="left:557.4px;top:1310.8px" width="17" height="19"><path d="M1 4.2 L1 1 L16 1 L16 4.2 M8.5 1 L8.5 17.5 M5 17.5 L12 17.5" fill="none" stroke="#777" stroke-width="1.6"></path></svg>
<div class="t" style="font-size: 25px; color: rgb(17, 17, 17); line-height: 25px; top: 1308.84px; left: 597.63px; transform: scaleX(0.9839); transform-origin: 0px 0px;">Department</div>
<svg style="left:1356.6px;top:1309px" width="17" height="19"><path d="M1 4.2 L1 1 L16 1 L16 4.2 M8.5 1 L8.5 17.5 M5 17.5 L12 17.5" fill="none" stroke="#777" stroke-width="1.6"></path></svg>
<div class="t" style="font-size: 25px; color: rgb(17, 17, 17); line-height: 25px; top: 1306.93px; left: 1396.94px; transform: scaleX(0.98); transform-origin: 0px 0px;">Department</div>
<svg style="left:0;top:0" width="2854" height="1605"><line x1="1020" y1="1319" x2="1164" y2="1319" stroke="#7ccb9c" stroke-width="2.5"></line><circle cx="1020" cy="1319" r="8" fill="#7ccb9c"></circle><circle cx="1164" cy="1319" r="8" fill="#7ccb9c"></circle><rect x="1061" y="1305.5" width="62" height="27" rx="13.5" fill="#4a9a6e"></rect></svg>
<div class="a" style="left:1100px;top:1302px;width:34px;height:34px;border-radius:50%;background:#fff;box-shadow:1px 2px 3px rgba(0,0,0,0.35)"></div>
<div class="a" style="left:1780px;top:1105px;width:12px;height:34px;border-radius:6px;background:#d0d0d2"></div>
<div class="t" style="font-size: 25px; color: rgb(43, 47, 51); line-height: 25px; top: 1456.13px; left: 523.63px; transform: scaleX(0.9655); transform-origin: 0px 0px;">On update:</div>
<div class="t" style="font-size: 22px; color: rgb(17, 17, 17); line-height: 22px; top: 1459.27px; left: 648.39px; transform: scaleX(0.9147); transform-origin: 0px 0px;">Replace</div>
<svg style="left:0;top:0" width="2854" height="1605"><path d="M743 1467 L749.2 1474.5 L755.4 1467" fill="none" stroke="#111" stroke-width="2"></path></svg>
<div class="t" style="font-size: 25px; color: rgb(43, 47, 51); line-height: 25px; top: 1456.13px; left: 775px; transform: scaleX(0.9529); transform-origin: 0px 0px;">the earlier version of this data in</div>
<div class="t b" style="font-size: 25px; color: rgb(43, 47, 51); line-height: 25px; top: 1456.24px; left: 1116.41px; transform: scaleX(0.8884); transform-origin: 0px 0px;">Result Dataset</div>
<div class="a" style="left:1458.1px;top:1455px;width:24px;height:24px;border-radius:3px;background:#4da672"></div>
<svg style="left:0;top:0" width="2854" height="1605"><path d="M1464.5 1467.3 L1468.8 1471.8 L1476 1462.8" fill="none" stroke="#fff" stroke-width="2"></path><circle cx="1838.1" cy="1469" r="11.2" fill="none" stroke="#2b2f33" stroke-width="2"></circle><line x1="1838.1" y1="1466.5" x2="1838.1" y2="1475.5" stroke="#2b2f33" stroke-width="2"></line><circle cx="1838.1" cy="1462.8" r="1.4" fill="#2b2f33"></circle></svg>
<div class="t" style="font-size: 25px; color: rgb(43, 47, 51); line-height: 25px; top: 1456.24px; left: 1495.08px; transform: scaleX(0.9576); transform-origin: 0px 0px;">Keep at the end of the pipeline</div>
<div class="t" style="font-size: 24px; color: rgb(90, 90, 90); letter-spacing: 2px; line-height: 24px; top: 1560.18px; left: 525.45px; transform: scaleX(0.9518); transform-origin: 0px 0px;">CANCEL</div>
<div class="a" style="left:686.1px;top:1543px;width:196.9px;height:57.7px;border-radius:4px;background:#459a6a"></div>
<div class="t b" style="font-size: 24px; color: rgb(255, 255, 255); letter-spacing: 2px; line-height: 24px; top: 1560.98px; left: 744.2px; transform: scaleX(0.9172); transform-origin: 0px 0px;">APPLY</div>
<div class="t" style="font-size: 25px; color: rgb(63, 154, 100); text-decoration: underline 1.5px; text-underline-offset: 3px; line-height: 25px; top: 1560.13px; left: 911.27px; transform: scaleX(0.9637); transform-origin: 0px 0px;">Learn More</div>
<!-- ================= MENU ================= -->
<div class="a" style="left:93.7px;top:152.8px;width:536.8px;height:942.2px;background:#fff;border-radius:6px;box-shadow:0 0 0 1.5px rgba(0,0,0,0.15),0 0 3px rgba(0,0,0,0.14),5px 5px 6px rgba(30,35,45,0.24)"></div>
<div class="a" style="left:114.1px;top:183.1px;width:496.3px;height:51.6px;background:#f4f4f4;border-radius:9px"></div>
<div class="t" style="font-size: 25px; color: rgb(154, 154, 154); line-height: 25px; top: 196.24px; left: 131.26px; transform: scaleX(0.9363); transform-origin: 0px 0px;">Search for a Function</div>
<svg style="left:0;top:0" width="700" height="1100"><g fill="none" stroke="#aaa" stroke-width="2"><circle cx="573.5" cy="203.2" r="6.6"></circle><line x1="578.3" y1="208" x2="580.5" y2="210.2"></line><path d="M581.2 208.4 L587.8 215 A2.3 2.3 0 0 1 584.6 218.2 L578 211.6 Z"></path></g></svg>
<div class="t" style="font-size: 26px; color: rgb(17, 17, 17); line-height: 26px; top: 276.39px; left: 176.3px; transform: scaleX(0.9235); transform-origin: 0px 0px;">Apply Filter</div>
<div class="t" style="font-size: 26px; color: rgb(17, 17, 17); line-height: 26px; top: 344.19px; left: 174.48px; transform: scaleX(0.9079); transform-origin: 0px 0px;">Label &amp; Insert Value</div>
<div class="t" style="font-size: 26px; color: rgb(17, 17, 17); line-height: 26px; top: 411.99px; left: 174.48px; transform: scaleX(0.9089); transform-origin: 0px 0px;">Extract JSON</div>
<div class="t" style="font-size: 26px; color: rgb(17, 17, 17); line-height: 26px; top: 479.79px; left: 174.56px; transform: scaleX(0.8684); transform-origin: 0px 0px;">Replace</div>
<svg style="left:0;top:0" width="700" height="1100"><path d="M577.7 485.0 L590.3 494.8 L577.7 504.6 Z" fill="#9a9a9a"></path></svg>
<div class="t" style="font-size: 26px; color: rgb(17, 17, 17); line-height: 26px; top: 547.59px; left: 175.39px; transform: scaleX(0.9097); transform-origin: 0px 0px;">Column Functions</div>
<svg style="left:0;top:0" width="700" height="1100"><path d="M577.7 552.8 L590.3 562.6 L577.7 572.4 Z" fill="#9a9a9a"></path></svg>
<div class="t" style="font-size: 26px; color: rgb(17, 17, 17); line-height: 26px; top: 615.39px; left: 174.46px; transform: scaleX(0.9202); transform-origin: 0px 0px;">Numeric Functions</div>
<svg style="left:0;top:0" width="700" height="1100"><path d="M577.7 620.6 L590.3 630.4 L577.7 640.2 Z" fill="#9a9a9a"></path></svg>
<div class="t" style="font-size: 26px; color: rgb(17, 17, 17); line-height: 26px; top: 683.19px; left: 176.3px; transform: scaleX(0.9092); transform-origin: 0px 0px;">Text Functions</div>
<svg style="left:0;top:0" width="700" height="1100"><path d="M577.7 688.4 L590.3 698.2 L577.7 708.0 Z" fill="#9a9a9a"></path></svg>
<div class="t" style="font-size: 26px; color: rgb(17, 17, 17); line-height: 26px; top: 750.99px; left: 174.46px; transform: scaleX(0.9198); transform-origin: 0px 0px;">Date Functions</div>
<svg style="left:0;top:0" width="700" height="1100"><path d="M577.7 756.2 L590.3 766.0 L577.7 775.8 Z" fill="#9a9a9a"></path></svg>
<div class="t" style="font-size: 26px; color: rgb(17, 17, 17); line-height: 26px; top: 818.79px; left: 174.52px; transform: scaleX(0.8883); transform-origin: 0px 0px;">Reshape, Group &amp; Aggregate</div>
<svg style="left:0;top:0" width="700" height="1100"><path d="M577.7 824.0 L590.3 833.8 L577.7 843.6 Z" fill="#9a9a9a"></path></svg>
<div class="t" style="font-size: 26px; color: rgb(17, 17, 17); line-height: 26px; top: 886.59px; left: 175.39px; transform: scaleX(0.9113); transform-origin: 0px 0px;">Consolidate</div>
<svg style="left:0;top:0" width="700" height="1100"><path d="M577.7 891.8 L590.3 901.6 L577.7 911.4 Z" fill="#9a9a9a"></path></svg>
<div class="t" style="font-size: 26px; color: rgb(17, 17, 17); line-height: 26px; top: 954.39px; left: 174.45px; transform: scaleX(0.9229); transform-origin: 0px 0px;">Merge &amp; Branch Out</div>
<svg style="left:0;top:0" width="700" height="1100"><path d="M577.7 959.6 L590.3 969.4 L577.7 979.2 Z" fill="#9a9a9a"></path></svg>
<div class="t" style="font-size: 26px; color: rgb(17, 17, 17); line-height: 26px; top: 1022.19px; left: 174.42px; transform: scaleX(0.9375); transform-origin: 0px 0px;">Export</div>
<svg style="left:0;top:0" width="700" height="1100"><path d="M577.7 1027.4 L590.3 1037.2 L577.7 1047.0 Z" fill="#9a9a9a"></path></svg>
<svg style="left:0;top:0" width="700" height="1100"><g fill="none" stroke="#3c3f44" stroke-width="2" stroke-linejoin="round" stroke-linecap="round">
<path d="M136.8 278 L155.3 278 L148.3 290.2 L148.3 296.2 Q148.3 298.2 146.1 298.2 Q144 298.2 144 296.2 L144 290.2 Z"></path>
<path d="M135 350.6 L152.2 350.6 L157 355.2 L152.2 359.8 L135 359.8 Z"></path>
<path d="M139.5 414.2 Q136.8 414.2 136.8 417 L136.8 422.5 Q136.8 425 135.6 425 Q136.8 425 136.8 427.5 L136.8 432.8 Q136.8 435.6 139.5 435.6"></path>
<path d="M156.4 414.2 Q159.2 414.2 159.2 417 L159.2 422.5 Q159.2 425 160.4 425 Q159.2 425 159.2 427.5 L159.2 432.8 Q159.2 435.6 156.4 435.6"></path>
<path d="M148 424.6 L147.4 429 Q147 431 145.8 431.4"></path><circle cx="148.2" cy="419.6" r="0.8" fill="#3c3f44"></circle>
<circle cx="141.1" cy="488.4" r="6.8"></circle>
<line x1="145.9" y1="493.2" x2="148.8" y2="496.1"></line>
<path d="M150.6 494.6 L157.3 501.3 A2.4 2.4 0 0 1 153.9 504.7 L147.2 498 Z"></path>
<rect x="134.7" y="549.5" width="12" height="20.5" rx="2.5"></rect>
<rect x="144.9" y="551.5" width="12.6" height="21" rx="2.5" fill="#fff"></rect>
<path d="M134.7 556.3 L144.9 556.3 M134.7 561.3 L144.9 561.3 M134.7 565.7 L144.9 565.7 M144.9 557 L157.5 557 M144.9 562 L157.5 562 M144.9 567 L157.5 567"></path>
<path d="M153.8 620.5 L153.8 617.6 L134.6 617.6 L144.6 628.7 L134.6 639.8 L153.8 639.8 L153.8 636.8" stroke-linecap="butt" stroke-linejoin="miter"></path>
<path d="M134.8 690 L134.8 687.2 L153.8 687.2 L153.8 690 M144.3 687.2 L144.3 706.8 M140.4 706.8 L148 706.8" stroke-linecap="butt"></path>
<circle cx="145.9" cy="764.7" r="11.1"></circle>
<path d="M145.9 758.6 L145.9 764.7 L151.3 768.2"></path>
<rect x="134.8" y="821.7" width="22.6" height="22.4" rx="2.8"></rect>
<path d="M134.8 826.8 L157.4 826.8 M139.9 821.7 L139.9 844.1"></path>
<path d="M146 838.9 C150.2 838.9 152.05 837 152.05 833"></path><path d="M143.4 838.9 L146.8 835.8 L146.8 842 Z M152.05 830 L148.9 833.6 L155.2 833.6 Z" fill="#3c3f44" stroke-width="0.8"></path>
<rect x="134.6" y="895.4" width="23" height="11" rx="1.3"></rect>
<circle cx="141.4" cy="964.8" r="7.2"></circle>
<circle cx="150.4" cy="964.8" r="7.2"></circle>
<path d="M142.4 1025.6 L139 1025.6 Q134.6 1025.6 134.6 1030 L134.6 1042 Q134.6 1046.3 139 1046.3 L151 1046.3 Q155.4 1046.3 155.4 1042 L155.4 1038.6"></path>
<path d="M142.4 1038.4 L154.4 1026.5 M146.3 1026.3 L154.6 1026.3 L154.6 1035.2"></path>
</g></svg>
<div class="a" style="left:0;top:0;width:0;height:0"></div>

</body></html>
